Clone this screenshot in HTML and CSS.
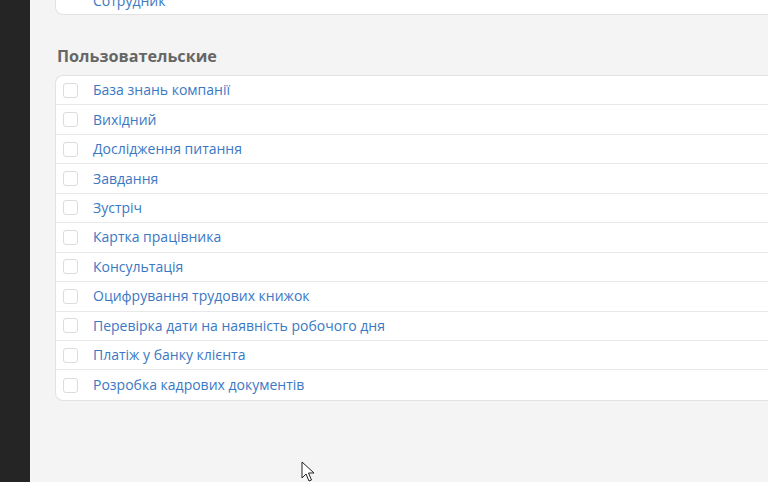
FILE: index.html
```html
<!DOCTYPE html>
<html lang="uk">
<head>
<meta charset="utf-8">
<link rel="stylesheet" href="styles.css">
</head>
<body>
<div class="app">
  <aside class="sidebar"></aside>
  <main class="main">
    <div class="card top-card">
      <div class="row last"><span class="box"></span><span class="label">Сотрудник</span></div>
    </div>
    <h2 class="section-title">Пользовательские</h2>
    <div class="card">
      <div class="row"><span class="box"></span><span class="label">База знань компанії</span></div>
      <div class="row"><span class="box"></span><span class="label">Вихідний</span></div>
      <div class="row"><span class="box"></span><span class="label">Дослідження питання</span></div>
      <div class="row"><span class="box"></span><span class="label">Завдання</span></div>
      <div class="row"><span class="box"></span><span class="label">Зустріч</span></div>
      <div class="row"><span class="box"></span><span class="label">Картка працівника</span></div>
      <div class="row"><span class="box"></span><span class="label">Консультація</span></div>
      <div class="row"><span class="box"></span><span class="label">Оцифрування трудових книжок</span></div>
      <div class="row"><span class="box"></span><span class="label">Перевірка дати на наявність робочого дня</span></div>
      <div class="row"><span class="box"></span><span class="label">Платіж у банку клієнта</span></div>
      <div class="row last"><span class="box"></span><span class="label">Розробка кадрових документів</span></div>
    </div>
  </main>
</div>
<svg class="cursor" width="14" height="22" viewBox="0 0 14 22"><path d="M1 1 L1 17 L5 13 L8 20 L10.5 19 L7.5 12 L13 12 Z" fill="#fff" stroke="#222" stroke-width="1" stroke-linejoin="round"/></svg>
</body>
</html>
```
FILE: styles.css
```css
* { box-sizing: border-box; }
html, body { margin: 0; padding: 0; height: 100%; overflow: hidden; }
body { font-family: "Open Sans", "Noto Sans", sans-serif; background: #f4f4f4; }
.app { display: flex; height: 482px; }
.sidebar { width: 30px; flex: none; background: #252525; }
.main { flex: 1; padding: 0 0 0 25px; background: #f4f4f4; overflow: hidden; }
.card {
  background: #fff;
  border: 1px solid #e2e2e2;
  border-right: none;
  border-radius: 8px 0 0 8px;
  margin-right: -10px;
}
.top-card { margin-top: -16px; height: 31px; overflow: hidden; }
.top-card .row { height: 29px; align-items: flex-start; }
.top-card .label { margin-top: 7px; }
.section-title {
  margin: 30px 0 8px 2px;
  font-size: 16.2px;
  font-weight: 700;
  color: #666;
  line-height: 22px;
}
.row {
  display: flex;
  align-items: center;
  height: 29.45px;
  border-bottom: 1px solid #e8e8e8;
  padding-left: 7px;
}
.row.last { border-bottom: none; }
.box {
  width: 15px; height: 15px;
  border: 1px solid #dcdcdc;
  border-radius: 3px;
  background: #fff;
  flex: none;
}
.label {
  margin-left: 15px;
  font-size: 14px;
  color: #3b78c4;
  line-height: 18px;
}
.cursor { position: absolute; left: 301px; top: 461px; }
```
